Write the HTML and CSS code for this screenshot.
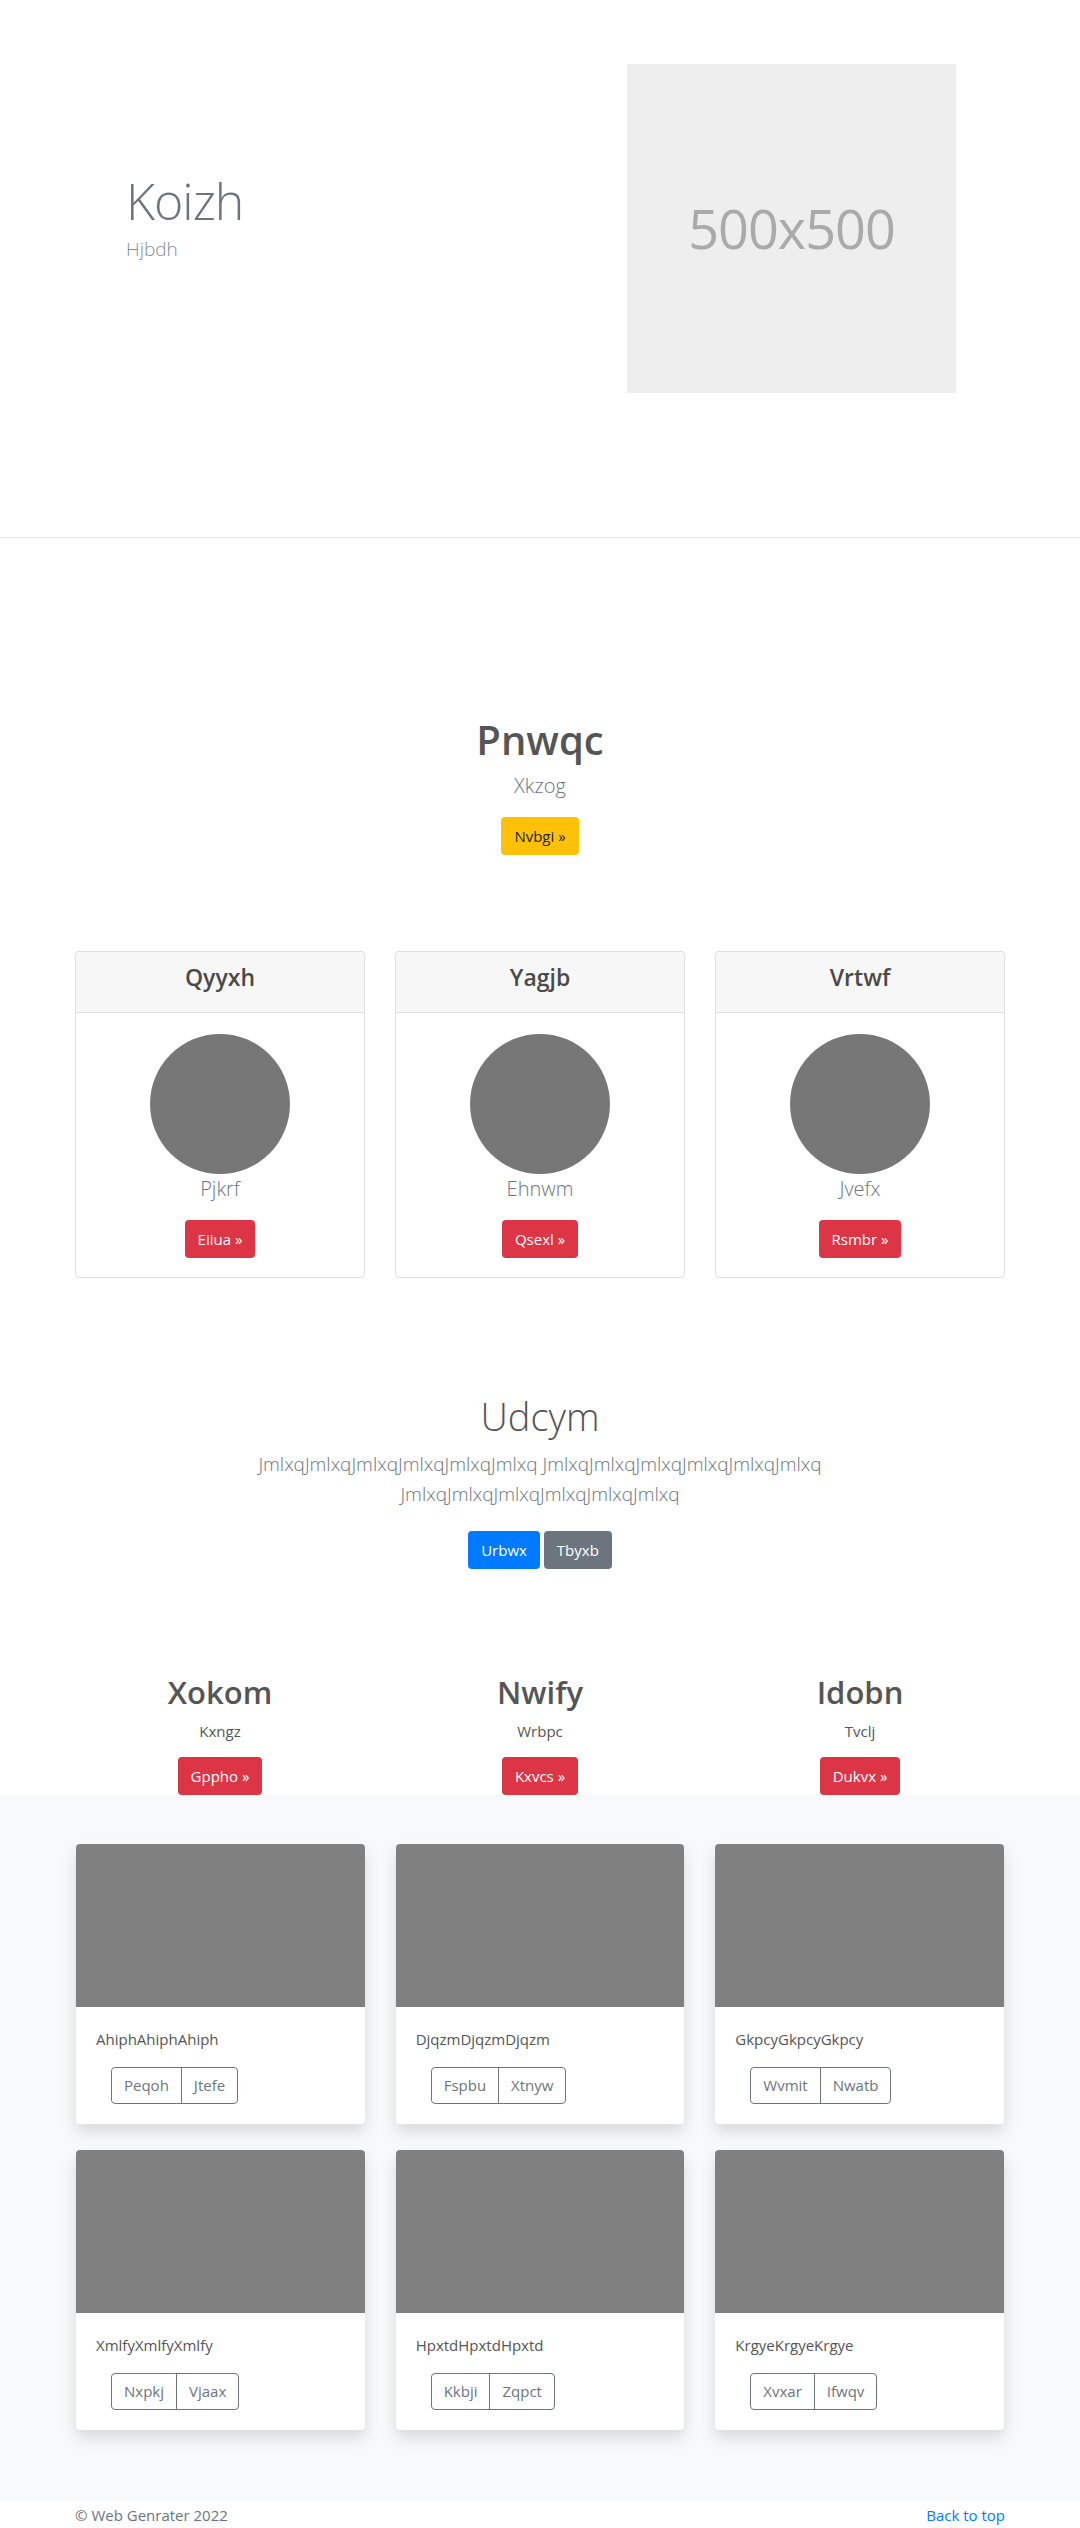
FILE: index.html
```html
<!DOCTYPE html>
<html lang="en">
<head>
<meta charset="utf-8">
<title>Web Genrater</title>
<link rel="stylesheet" href="styles.css">
</head>
<body>
<header class="hero">
  <div class="container hero-row">
    <div class="hero-text">
      <h1 class="hero-title">Koizh</h1>
      <p class="hero-sub">Hjbdh</p>
    </div>
    <div class="hero-media">
      <div class="placeholder">500x500</div>
    </div>
  </div>
</header>

<section class="intro">
  <h1 class="intro-title">Pnwqc</h1>
  <p class="lead">Xkzog</p>
  <a class="btn btn-warning" href="#">Nvbgi »</a>
</section>

<section class="container price-row">
  <div class="pcard">
    <div class="pcard-head"><h4>Qyyxh</h4></div>
    <div class="pcard-body">
      <div class="avatar"></div>
      <p class="lead">Pjkrf</p>
      <a class="btn btn-danger" href="#">Eiiua »</a>
    </div>
  </div>
  <div class="pcard">
    <div class="pcard-head"><h4>Yagjb</h4></div>
    <div class="pcard-body">
      <div class="avatar"></div>
      <p class="lead">Ehnwm</p>
      <a class="btn btn-danger" href="#">Qsexl »</a>
    </div>
  </div>
  <div class="pcard">
    <div class="pcard-head"><h4>Vrtwf</h4></div>
    <div class="pcard-body">
      <div class="avatar"></div>
      <p class="lead">Jvefx</p>
      <a class="btn btn-danger" href="#">Rsmbr »</a>
    </div>
  </div>
</section>

<section class="jumbo">
  <h1 class="jumbo-title">Udcym</h1>
  <p class="lead jumbo-text">JmlxqJmlxqJmlxqJmlxqJmlxqJmlxq JmlxqJmlxqJmlxqJmlxqJmlxqJmlxq JmlxqJmlxqJmlxqJmlxqJmlxqJmlxq</p>
  <div class="jumbo-actions">
    <a class="btn btn-primary" href="#">Urbwx</a>
    <a class="btn btn-secondary" href="#">Tbyxb</a>
  </div>
</section>

<section class="container features">
  <div class="feature">
    <h2>Xokom</h2>
    <p>Kxngz</p>
    <a class="btn btn-danger" href="#">Gppho »</a>
  </div>
  <div class="feature">
    <h2>Nwify</h2>
    <p>Wrbpc</p>
    <a class="btn btn-danger" href="#">Kxvcs »</a>
  </div>
  <div class="feature">
    <h2>Idobn</h2>
    <p>Tvclj</p>
    <a class="btn btn-danger" href="#">Dukvx »</a>
  </div>
</section>

<section class="album">
  <div class="container album-grid">
    <div class="acard">
      <div class="thumb"></div>
      <div class="acard-body">
        <p>AhiphAhiphAhiph</p>
        <div class="btn-group"><a href="#">Peqoh</a><a href="#">Jtefe</a></div>
      </div>
    </div>
    <div class="acard">
      <div class="thumb"></div>
      <div class="acard-body">
        <p>DjqzmDjqzmDjqzm</p>
        <div class="btn-group"><a href="#">Fspbu</a><a href="#">Xtnyw</a></div>
      </div>
    </div>
    <div class="acard">
      <div class="thumb"></div>
      <div class="acard-body">
        <p>GkpcyGkpcyGkpcy</p>
        <div class="btn-group"><a href="#">Wvmit</a><a href="#">Nwatb</a></div>
      </div>
    </div>
    <div class="acard">
      <div class="thumb"></div>
      <div class="acard-body">
        <p>XmlfyXmlfyXmlfy</p>
        <div class="btn-group"><a href="#">Nxpkj</a><a href="#">Vjaax</a></div>
      </div>
    </div>
    <div class="acard">
      <div class="thumb"></div>
      <div class="acard-body">
        <p>HpxtdHpxtdHpxtd</p>
        <div class="btn-group"><a href="#">Kkbji</a><a href="#">Zqpct</a></div>
      </div>
    </div>
    <div class="acard">
      <div class="thumb"></div>
      <div class="acard-body">
        <p>KrgyeKrgyeKrgye</p>
        <div class="btn-group"><a href="#">Xvxar</a><a href="#">Ifwqv</a></div>
      </div>
    </div>
  </div>
</section>

<footer class="container footer">
  <span class="copy">© Web Genrater 2022</span>
  <a class="totop" href="#">Back to top</a>
</footer>
</body>
</html>
```

FILE: styles.css
```css
* { box-sizing: border-box; }

html, body {
  margin: 0;
  padding: 0;
}

body {
  font-family: "Open Sans", "Noto Sans", sans-serif;
  font-size: 16px;
  line-height: 1.5;
  color: #555;
  background: #fff;
}

h1, h2, h4, p { margin: 0; }

.container {
  width: 960px;
  margin: 0 auto;
  padding: 0 15px;
}

/* Hero */
.hero {
  border-bottom: 1px solid #e5e5e5;
  padding: 64px 0 144px;
}

.hero-row {
  display: grid;
  grid-template-columns: 450px 450px;
  column-gap: 30px;
}

.hero-text {
  padding-left: 51px;
  padding-top: 107px;
}

.hero-title {
  font-size: 50px;
  font-weight: 300;
  line-height: 1.2;
  color: #6c757d;
  letter-spacing: -1px;
}

.hero-sub {
  font-size: 19px;
  font-weight: 300;
  line-height: 30px;
  color: #868e96;
  margin-top: 3px;
}

.hero-media {
  padding-left: 72px;
}

.placeholder {
  width: 329px;
  height: 329px;
  background: #eee;
  color: #aaa;
  font-size: 54px;
  font-weight: 400;
  display: flex;
  align-items: center;
  justify-content: center;
  letter-spacing: -1px;
}

/* Buttons */
.btn {
  display: inline-block;
  font-size: 15px;
  line-height: 24px;
  padding: 6px 12px;
  border: 1px solid transparent;
  border-radius: 4px;
  text-decoration: none;
  vertical-align: middle;
}

.btn-warning { background: #ffc107; color: #212529; }
.btn-danger { background: #dc3545; color: #fff; }
.btn-primary { background: #007bff; color: #fff; }
.btn-secondary { background: #6c757d; color: #fff; }

.lead {
  font-size: 20px;
  font-weight: 300;
  line-height: 30px;
  color: #6c757d;
}

/* Intro */
.intro {
  text-align: center;
  padding-top: 177px;
}

.intro-title {
  font-size: 40px;
  font-weight: 600;
  line-height: 50px;
  color: #555;
  margin-bottom: 6px;
}

.intro .lead { margin-bottom: 16px; }

/* Price cards */
.price-row {
  display: grid;
  grid-template-columns: repeat(3, 1fr);
  column-gap: 30px;
  margin-top: 96px;
}

.pcard {
  border: 1px solid #dfdfdf;
  border-radius: 4px;
  text-align: center;
  overflow: hidden;
}

.pcard-head {
  background: #f7f7f7;
  border-bottom: 1px solid #dfdfdf;
  padding: 12px 20px 12px;
}

.pcard-head h4 {
  font-size: 23px;
  font-weight: 600;
  line-height: 1.2;
  color: #4a4a4a;
  margin-bottom: 8px;
}

.pcard-body {
  padding: 21px 20px 19px;
}

.avatar {
  width: 140px;
  height: 140px;
  border-radius: 50%;
  background: #777;
  margin: 0 auto;
}

.pcard-body .lead { margin-bottom: 16px; }

/* Jumbo */
.jumbo {
  text-align: center;
  margin-top: 114px;
}

.jumbo-title {
  font-size: 38px;
  font-weight: 300;
  line-height: 48px;
  color: #555;
  margin-bottom: 9px;
}

.jumbo-text {
  width: 620px;
  margin: 0 auto 22px;
  font-size: 19px;
  letter-spacing: 0;
}

.jumbo-actions {
  display: flex;
  justify-content: center;
  gap: 4px;
}

/* Features */
.features {
  display: grid;
  grid-template-columns: repeat(3, 1fr);
  column-gap: 30px;
  text-align: center;
  margin-top: 104px;
}

.feature h2 {
  font-size: 31px;
  font-weight: 600;
  line-height: 38px;
  color: #555;
  margin-bottom: 9px;
}

.feature p {
  font-size: 15px;
  color: #555;
  margin-bottom: 15px;
}

/* Album */
.album {
  background: #f8f9fa;
  padding: 49px 0 72px;
}

.album-grid {
  display: grid;
  grid-template-columns: repeat(3, 1fr);
  column-gap: 31px;
  row-gap: 26px;
  padding-left: 16px;
  padding-right: 16px;
}

.acard {
  background: #fff;
  border-radius: 4px;
  overflow: hidden;
  box-shadow: 0 8px 16px rgba(0, 0, 0, 0.13);
}

.thumb {
  height: 163px;
  background: #808080;
}

.acard-body {
  padding: 20px;
}

.acard-body p {
  font-size: 15px;
  line-height: 24px;
  color: #555;
  margin-bottom: 16px;
}

.btn-group {
  display: inline-flex;
  margin-left: 15px;
  border: 1px solid #6c757d;
  border-radius: 4px;
}

.btn-group a {
  font-size: 15px;
  line-height: 23px;
  padding: 6px 12px;
  color: #6c757d;
  text-decoration: none;
}

.btn-group a + a { border-left: 1px solid #6c757d; }

/* Footer */
.footer {
  display: flex;
  justify-content: space-between;
  padding-top: 2px;
  font-size: 15px;
  line-height: 22px;
}

.copy { color: #6c757d; }
.totop { color: #007bff; text-decoration: none; }
```
